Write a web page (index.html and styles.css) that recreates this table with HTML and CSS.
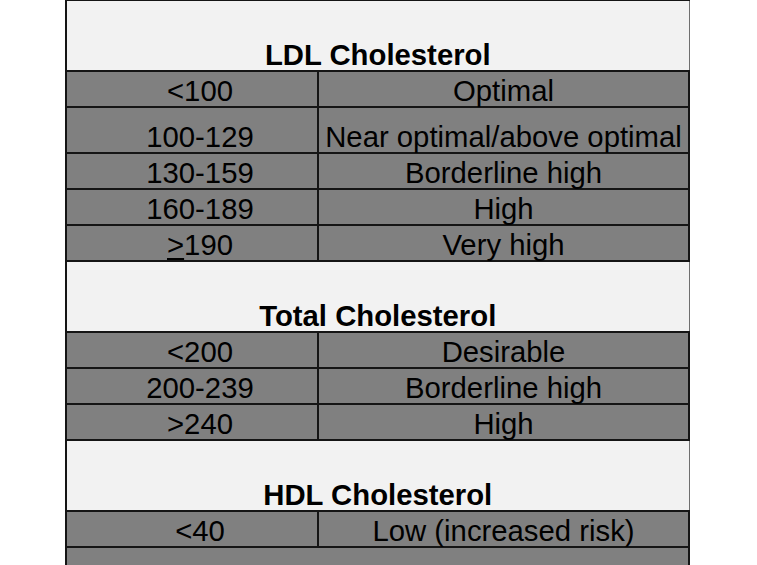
FILE: index.html
```html
<!DOCTYPE html>
<html lang="en">
<head>
<meta charset="utf-8">
<title>Cholesterol levels</title>
<link rel="stylesheet" href="styles.css">
</head>
<body>
<table class="chart">
  <colgroup>
    <col class="col-range">
    <col class="col-label">
  </colgroup>
  <tbody>
    <tr class="head"><th colspan="2">LDL Cholesterol</th></tr>
    <tr class="row"><td class="range">&lt;100</td><td class="label">Optimal</td></tr>
    <tr class="row tall"><td class="range">100-129</td><td class="label">Near optimal/above optimal</td></tr>
    <tr class="row"><td class="range">130-159</td><td class="label">Borderline high</td></tr>
    <tr class="row"><td class="range">160-189</td><td class="label">High</td></tr>
    <tr class="row"><td class="range"><span class="ul">&gt;</span>190</td><td class="label">Very high</td></tr>
    <tr class="head"><th colspan="2">Total Cholesterol</th></tr>
    <tr class="row"><td class="range">&lt;200</td><td class="label">Desirable</td></tr>
    <tr class="row"><td class="range">200-239</td><td class="label">Borderline high</td></tr>
    <tr class="row"><td class="range">&gt;240</td><td class="label">High</td></tr>
    <tr class="head"><th colspan="2">HDL Cholesterol</th></tr>
    <tr class="row"><td class="range">&lt;40</td><td class="label">Low (increased risk)</td></tr>
    <tr class="row tail"><td colspan="2" class="blank"></td></tr>
  </tbody>
</table>
</body>
</html>
```

FILE: styles.css
```css
html, body {
  margin: 0;
  padding: 0;
  background: #ffffff;
  overflow: hidden;
}

.chart {
  border-collapse: collapse;
  table-layout: fixed;
  width: 625px;
  margin: -1px 0 0 65px;
  font-family: "Liberation Sans", Arial, sans-serif;
  font-size: 29.3px;
  color: #000000;
}

.col-range { width: 252px; }
.col-label { width: 371px; }

.chart th,
.chart td {
  padding: 0 0 1px 0;
  line-height: 28px;
  text-align: center;
  vertical-align: bottom;
  white-space: nowrap;
  border: 2px solid #151515;
}

.head th {
  height: 68px;
  font-weight: bold;
  background: #f2f2f2;
  border-right: 1px solid #6f6f6f;
}

.row td {
  height: 33px;
  background: #808080;
}

.row.tall td { height: 43px; }

.chart td.range { padding-left: 16px; }

.ul {
  text-decoration: underline;
  text-decoration-thickness: 2px;
  text-underline-offset: 3px;
}

.tail td {
  height: 40px;
  border-bottom: none;
}
```
